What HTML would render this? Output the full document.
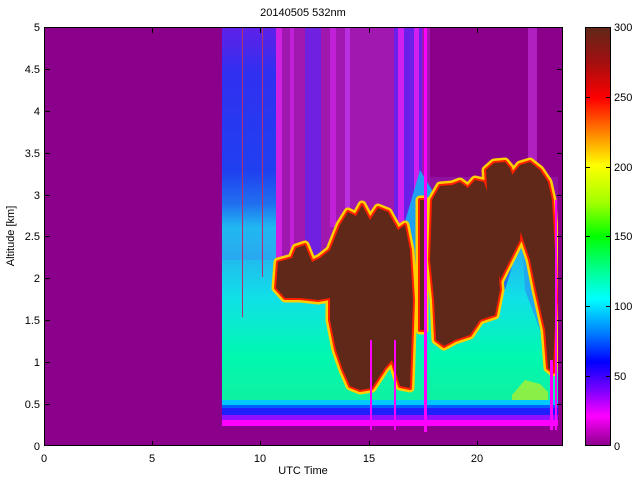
<!DOCTYPE html>
<html><head><meta charset="utf-8"><style>
html,body{margin:0;padding:0;background:#fff;}
svg{display:block;font-family:"Liberation Sans",sans-serif;}
</style></head><body>
<svg width="640" height="480" viewBox="0 0 640 480" xmlns="http://www.w3.org/2000/svg">
<defs>
<linearGradient id="cb" x1="0" y1="1" x2="0" y2="0">
<stop offset="0" stop-color="#8b008b"/>
<stop offset="0.07" stop-color="#ff00ff"/>
<stop offset="0.13" stop-color="#8000ff"/>
<stop offset="0.2" stop-color="#0000ff"/>
<stop offset="0.27" stop-color="#0080ff"/>
<stop offset="0.35" stop-color="#00ffff"/>
<stop offset="0.42" stop-color="#00ff90"/>
<stop offset="0.5" stop-color="#00ff00"/>
<stop offset="0.58" stop-color="#a0ff00"/>
<stop offset="0.67" stop-color="#ffff00"/>
<stop offset="0.75" stop-color="#ff8000"/>
<stop offset="0.83" stop-color="#ff0000"/>
<stop offset="0.92" stop-color="#a01010"/>
<stop offset="1" stop-color="#602818"/>
</linearGradient>
<linearGradient id="base" x1="0" y1="240" x2="0" y2="405" gradientUnits="userSpaceOnUse">
<stop offset="0" stop-color="#2aa8f0"/>
<stop offset="0.35" stop-color="#10e0e8"/>
<stop offset="0.7" stop-color="#00f8b0"/>
<stop offset="1" stop-color="#10f0a0"/>
</linearGradient>
<linearGradient id="left" x1="0" y1="27" x2="0" y2="260" gradientUnits="userSpaceOnUse">
<stop offset="0" stop-color="#6020e8"/>
<stop offset="0.2" stop-color="#3030f0"/>
<stop offset="0.62" stop-color="#2040f0"/>
<stop offset="0.76" stop-color="#2070f0"/>
<stop offset="0.86" stop-color="#20b8f0"/>
<stop offset="1" stop-color="#2aa8f0"/>
</linearGradient>
<g id="clouds">
<polygon points="276,288 278,262 292,258 296,248 305,245 312,262 320,258 330,250 330,298 318,300 300,298 285,298"/>
<polygon points="330,250 340,225 348,212 356,216 362,205 370,220 378,208 388,212 398,230 405,225 410,250 413,300 410,388 400,386 392,360 385,368 372,388 360,390 350,386 343,370 336,350 330,320"/>
<polygon points="432,200 440,186 452,185 460,182 468,188 475,180 484,182 490,200 496,235 500,290 495,315 480,320 470,335 455,340 444,346 436,340 434,300 430,260"/>
<polygon points="486,170 494,163 505,162 510,168 514,180 520,178 524,190 520,240 510,260 500,280 494,250 488,210"/>
<polygon points="512,175 520,165 530,162 540,170 548,182 552,200 555,250 556,300 553,372 548,368 545,330 536,290 530,260 520,230"/>
<rect x="420" y="200" width="4" height="130"/>
</g>
</defs>
<rect x="44" y="27" width="519" height="419" fill="#8b008b"/>
<rect x="222" y="240" width="336" height="170" fill="url(#base)"/>
<rect x="222" y="27" width="54" height="233" fill="url(#left)"/>
<rect x="276" y="27" width="154" height="235" fill="#a018b0"/>
<rect x="276" y="27" width="6" height="235" fill="#d020e0"/>
<rect x="290" y="27" width="4" height="235" fill="#c020d8"/>
<rect x="305" y="27" width="16" height="235" fill="#7020e0"/>
<rect x="330" y="27" width="6" height="200" fill="#c020d8"/>
<rect x="345" y="27" width="5" height="200" fill="#b830e0"/>
<rect x="394" y="27" width="28" height="200" fill="#6a20e8"/>
<rect x="398" y="27" width="6" height="200" fill="#d020f0"/>
<rect x="414" y="27" width="5" height="200" fill="#d020f0"/>
<rect x="430" y="27" width="128" height="150" fill="#8b008b"/>
<rect x="430" y="177" width="128" height="70" fill="#9010a0"/>
<rect x="528" y="27" width="9" height="150" fill="#b020c0"/>
<polygon points="404,225 420,170 432,190 432,280 410,280" fill="#20a0f0"/>
<polygon points="490,185 512,178 520,240 505,290 495,250" fill="#2070f0"/>
<polygon points="520,200 540,210 548,300 540,330 525,290" fill="#20a8f0"/>
<use href="#clouds" fill="none" stroke="#ffd000" stroke-width="9" stroke-linejoin="round"/>
<use href="#clouds" fill="#602818" stroke="#ff2000" stroke-width="4" stroke-linejoin="round"/>
<use href="#clouds" fill="#602818"/>
<polygon points="512,395 525,380 540,384 548,392 548,402 512,402" fill="#c0f020" opacity="0.7"/>
<rect x="222" y="400" width="336" height="6" fill="#00c8ff"/>
<rect x="222" y="405" width="336" height="4" fill="#0060ff"/>
<rect x="222" y="408" width="336" height="7" fill="#2020ff"/>
<rect x="222" y="415" width="336" height="5" fill="#9010ff"/>
<rect x="222" y="420" width="336" height="6" fill="#ff00ff"/>
<rect x="222" y="426" width="336" height="20" fill="#8b008b"/>
<rect x="424" y="27" width="3" height="405" fill="#ff00ff"/>
<rect x="370" y="340" width="2" height="90" fill="#ff00ff"/>
<rect x="394" y="340" width="2" height="90" fill="#ff00ff"/>
<rect x="550" y="360" width="3" height="70" fill="#ff00ff"/>
<rect x="555" y="200" width="2" height="230" fill="#ff00ff"/>
<rect x="242" y="27" width="1" height="290" fill="#b03070"/>
<rect x="262" y="27" width="1" height="250" fill="#b03070"/>
<rect x="558" y="27" width="5" height="419" fill="#8b008b"/>
<rect x="44.5" y="27.5" width="518" height="418" fill="none" stroke="#000" stroke-width="1"/>
<g stroke="#000" stroke-width="1">
<path d="M152.5,446v-5M260.5,446v-5M369.5,446v-5M477.5,446v-5M152.5,28v5M260.5,28v5M369.5,28v5M477.5,28v5"/>
<path d="M45,69.5h5M45,111.5h5M45,153.5h5M45,195.5h5M45,236.5h5M45,278.5h5M45,320.5h5M45,362.5h5M45,404.5h5"/>
<path d="M562,69.5h-5M562,111.5h-5M562,153.5h-5M562,195.5h-5M562,236.5h-5M562,278.5h-5M562,320.5h-5M562,362.5h-5M562,404.5h-5"/>
</g>
<rect x="585.5" y="27.5" width="25" height="418" fill="url(#cb)" stroke="#000"/>
<g stroke="#000"><path d="M606,97.5h5M606,167.5h5M606,236.5h5M606,306.5h5M606,376.5h5M586,97.5h4M586,167.5h4M586,236.5h4M586,306.5h4M586,376.5h4"/></g>
<g font-size="11" fill="#000">
<text x="303" y="16" text-anchor="middle">20140505 532nm</text>
<text x="303" y="474" text-anchor="middle">UTC Time</text>
<text transform="translate(14,236) rotate(-90)" text-anchor="middle">Altitude [km]</text>
<g text-anchor="end">
<text x="40" y="31">5</text><text x="40" y="73">4.5</text><text x="40" y="115">4</text><text x="40" y="157">3.5</text><text x="40" y="199">3</text><text x="40" y="240">2.5</text><text x="40" y="282">2</text><text x="40" y="324">1.5</text><text x="40" y="366">1</text><text x="40" y="408">0.5</text><text x="40" y="450">0</text>
</g>
<g text-anchor="middle">
<text x="44" y="462">0</text><text x="152" y="462">5</text><text x="260" y="462">10</text><text x="369" y="462">15</text><text x="477" y="462">20</text>
</g>
<text x="614" y="31">300</text><text x="614" y="101">250</text><text x="614" y="171">200</text><text x="614" y="240">150</text><text x="614" y="310">100</text><text x="614" y="380">50</text><text x="614" y="450">0</text>
</g>
</svg>
</body></html>
